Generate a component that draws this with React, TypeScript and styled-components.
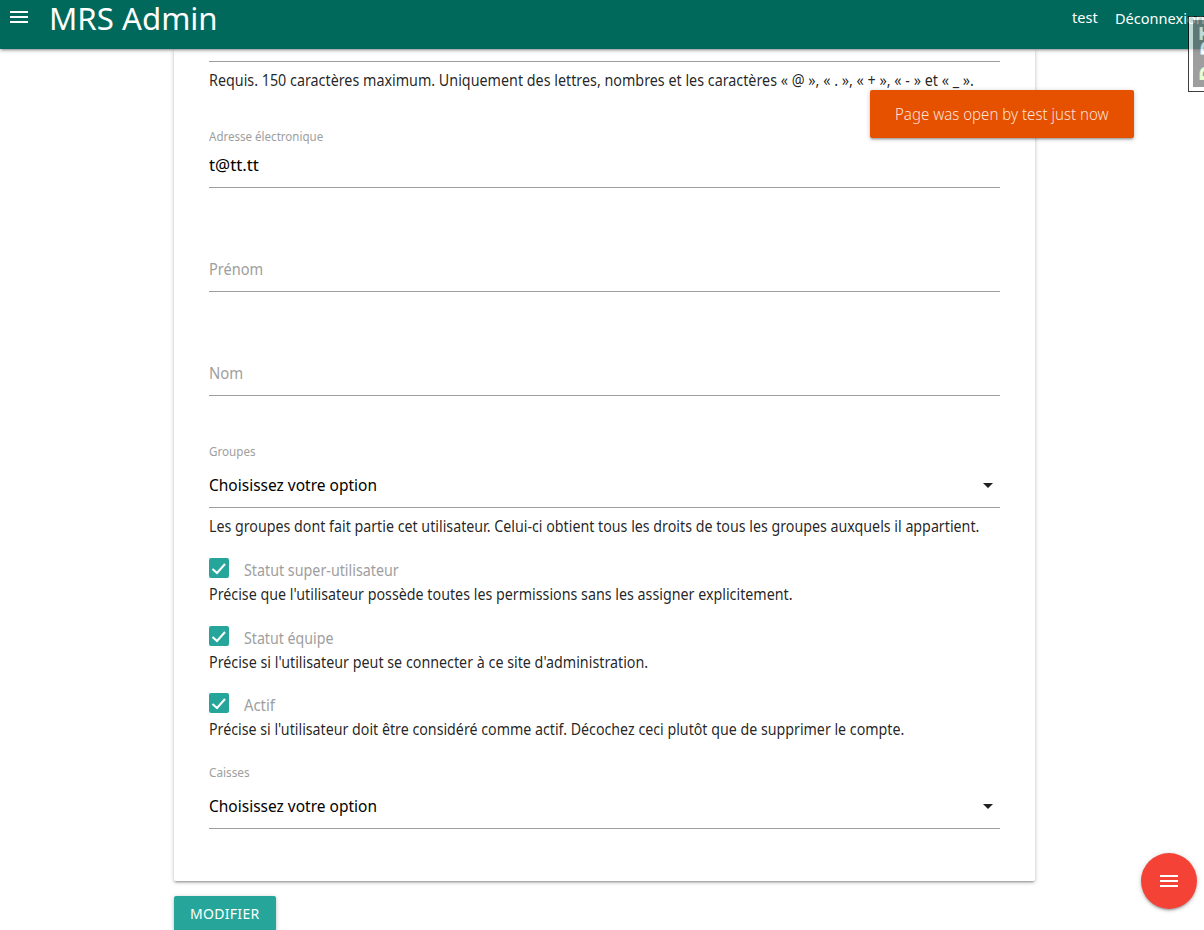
import React from 'react';
import styled, { createGlobalStyle } from 'styled-components';

const Global = createGlobalStyle`
  * { box-sizing: border-box; }
  html, body { margin: 0; height: 930px; overflow: hidden; background: #fff; }
  body { font-family: "Noto Sans", sans-serif; font-size: 15.75px; color: rgba(0,0,0,.87); }
`;
const depth = '0 2px 2px 0 rgba(0,0,0,.14), 0 3px 1px -2px rgba(0,0,0,.12), 0 1px 5px 0 rgba(0,0,0,.2)';

const T = styled.span<{ $ls?: number; $sx?: number }>`
  display: inline-block;
  white-space: nowrap;
  letter-spacing: ${p => p.$ls ?? 0}px;
  transform: scaleX(${p => p.$sx ?? 1});
  transform-origin: left center;
`;
const Page = styled.div`
  position: relative;
  width: 1204px;
  height: 930px;
  overflow: hidden;
`;
const Header = styled.header`
  position: relative;
  z-index: 2;
  display: flex;
  height: 49px;
  padding-left: 7px;
  background: #00695c;
  color: #fff;
  box-shadow: ${depth};
`;
const MenuButton = styled.div`
  flex-shrink: 0;
  width: 24px;
  height: 24px;
  margin-top: 5px;
`;
const Brand = styled.h1`
  flex-shrink: 0;
  width: 1023px;
  margin: 0 0 0 18px;
  font-size: 31px;
  line-height: 36px;
  font-weight: 400;
  white-space: nowrap;
`;
const NavLink = styled.a<{ $w: number; $lh: number }>`
  width: ${p => p.$w}px;
  flex-shrink: 0;
  line-height: ${p => p.$lh}px;
  font-size: 15px;
`;
const Main = styled.main`
  width: 861px;
  margin-left: 174px;
`;
const Card = styled.section`
  height: 832px;
  padding: 0 35px;
  border-radius: 2px;
  background: #fff;
  box-shadow: ${depth};
`;
const Field = styled.div<{ $h: number }>`
  display: flex;
  flex-direction: column;
  justify-content: flex-end;
  height: ${p => p.$h}px;
  border-bottom: 1px solid #9e9e9e;
`;
const Label = styled.label<{ $gap: number }>`
  font-size: 12px;
  line-height: 16px;
  margin-bottom: ${p => p.$gap}px;
  color: #9e9e9e;
`;
const Value = styled.div<{ $muted?: boolean; $bottom: number }>`
  display: flex;
  justify-content: space-between;
  align-items: center;
  height: 24px;
  margin-bottom: ${p => p.$bottom}px;
  font-size: ${p => (p.$muted ? 15.5 : 16)}px;
  color: ${p => (p.$muted ? '#9e9e9e' : '#000')};
`;
const Help = styled.div`
  height: 38px;
  line-height: 37px;
`;
const CheckGroup = styled.div`
  height: 67.5px;
  padding-top: 12px;
`;
const CheckRow = styled.div`
  display: flex;
  gap: 15px;
  height: 25px;
  line-height: 25px;
  color: #9e9e9e;
`;
const Box = styled.div`
  width: 20px;
  height: 20px;
  border-radius: 2px;
  background: #26a69a;
  svg { display: block; }
`;
const CheckHelp = styled.div`
  line-height: 22px;
`;
const Submit = styled.button`
  display: block;
  width: 102px;
  height: 36px;
  margin-top: 15px;
  padding: 0 0 0 16px;
  border: 0;
  border-radius: 2px;
  background: #26a69a;
  color: #fff;
  text-align: left;
  font: 14px/36px "Noto Sans", sans-serif;
  box-shadow: ${depth};
`;
const Toast = styled.div`
  position: absolute;
  z-index: 3;
  left: 870px;
  top: 90px;
  width: 264px;
  height: 48px;
  padding-left: 25px;
  border-radius: 2px;
  background: #e65100;
  color: rgba(255,255,255,.85);
  font-size: 16px;
  font-weight: 300;
  line-height: 48px;
  box-shadow: ${depth};
`;
const Fab = styled.div`
  position: absolute;
  left: 1141px;
  top: 853px;
  display: grid;
  place-items: center;
  width: 56px;
  height: 56px;
  border-radius: 50%;
  background: #f44336;
  box-shadow: ${depth};
`;
const DebugHandle = styled.div`
  position: absolute;
  z-index: 4;
  left: 1188px;
  top: 16px;
  width: 30px;
  height: 76px;
  padding: 3px 4px 4px;
  border: 1px solid #000;
  background: #fff;
  opacity: .75;
`;
const DebugLogo = styled.div`
  display: flex;
  flex-direction: column;
  width: 26px;
  height: 67px;
  padding: 7px 0 0 6px;
  background: #7e7e7e;
`;
const LogoLetter = styled.span<{ $h: number; $green?: boolean }>`
  display: flex;
  align-items: center;
  justify-content: center;
  width: 15px;
  height: ${p => p.$h}px;
  color: ${p => (p.$green ? '#e2ffc4' : '#fff')};
  font: bold 21px/15px "Liberation Sans", sans-serif;
  -webkit-text-stroke: .6px currentColor;
  transform: rotate(-90deg);
`;

const Menu = () => (
  <svg width="24" height="24" viewBox="0 0 24 24" fill="#fff"><path d="M3 18h18v-2H3v2zm0-5h18v-2H3v2zm0-7v2h18V6H3z" /></svg>
);
const Caret = () => (
  <svg width="24" height="24" viewBox="0 0 24 24" fill="#212121"><path d="M7 10l5 5 5-5z" /></svg>
);

const checks = [
  { label: 'Statut super-utilisateur', help: "Précise que l'utilisateur possède toutes les permissions sans les assigner explicitement.", a: 0.907, b: 0.906 },
  { label: 'Statut équipe', help: "Précise si l'utilisateur peut se connecter à ce site d'administration.", a: 0.9, b: 0.907 },
  { label: 'Actif', help: "Précise si l'utilisateur doit être considéré comme actif. Décochez ceci plutôt que de supprimer le compte.", a: 0.94, b: 0.903 },
];

export default function App() {
  return (
    <Page>
      <Global />
      <Header>
        <MenuButton><Menu /></MenuButton>
        <Brand><T $sx={1.007}>MRS Admin</T></Brand>
        <NavLink $w={43} $lh={35}><T $sx={0.97}>test</T></NavLink>
        <NavLink $w={89} $lh={37}><T $sx={0.97}>Déconnexion</T></NavLink>
      </Header>
      <Main>
        <Card>
          <Field $h={13} />
          <Help><T $sx={0.909}>Requis. 150 caractères maximum. Uniquement des lettres, nombres et les caractères « @ », « . », « + », « - » et « _ ».</T></Help>
          <Field $h={88}>
            <Label $gap={8}><T $sx={0.962}>Adresse électronique</T></Label>
            <Value $bottom={10}><T $sx={1.05}>t@tt.tt</T></Value>
          </Field>
          <Field $h={104}><Value $muted $bottom={10}><T $sx={0.94}>Prénom</T></Value></Field>
          <Field $h={104}><Value $muted $bottom={10}><T $sx={0.96}>Nom</T></Value></Field>
          <Field $h={112}>
            <Label $gap={13}><T $sx={0.97}>Groupes</T></Label>
            <Value $bottom={10}><T $sx={0.968}>Choisissez votre option</T><Caret /></Value>
          </Field>
          <Help><T $sx={0.904}>Les groupes dont fait partie cet utilisateur. Celui-ci obtient tous les droits de tous les groupes auxquels il appartient.</T></Help>
          {checks.map(c => (
            <CheckGroup key={c.label}>
              <CheckRow>
                <Box><svg width="20" height="20"><path d="M3.5 11l4.5 4L16 6" fill="none" stroke="#fff" strokeWidth="2" /></svg></Box>
                <T $sx={c.a}>{c.label}</T>
              </CheckRow>
              <CheckHelp><T $sx={c.b}>{c.help}</T></CheckHelp>
            </CheckGroup>
          ))}
          <Field $h={80.5}>
            <Label $gap={13}><T $sx={0.98}>Caisses</T></Label>
            <Value $bottom={10}><T $sx={0.968}>Choisissez votre option</T><Caret /></Value>
          </Field>
        </Card>
        <Submit><T $ls={0.3}>MODIFIER</T></Submit>
      </Main>
      <Toast><T $sx={0.94}>Page was open by test just now</T></Toast>
      <Fab><Menu /></Fab>
      <DebugHandle>
        <DebugLogo>
          <LogoLetter $h={13}>T</LogoLetter>
          <LogoLetter $h={16}>D</LogoLetter>
          <LogoLetter $h={10} />
          <LogoLetter $h={15} $green>D</LogoLetter>
        </DebugLogo>
      </DebugHandle>
    </Page>
  );
}
